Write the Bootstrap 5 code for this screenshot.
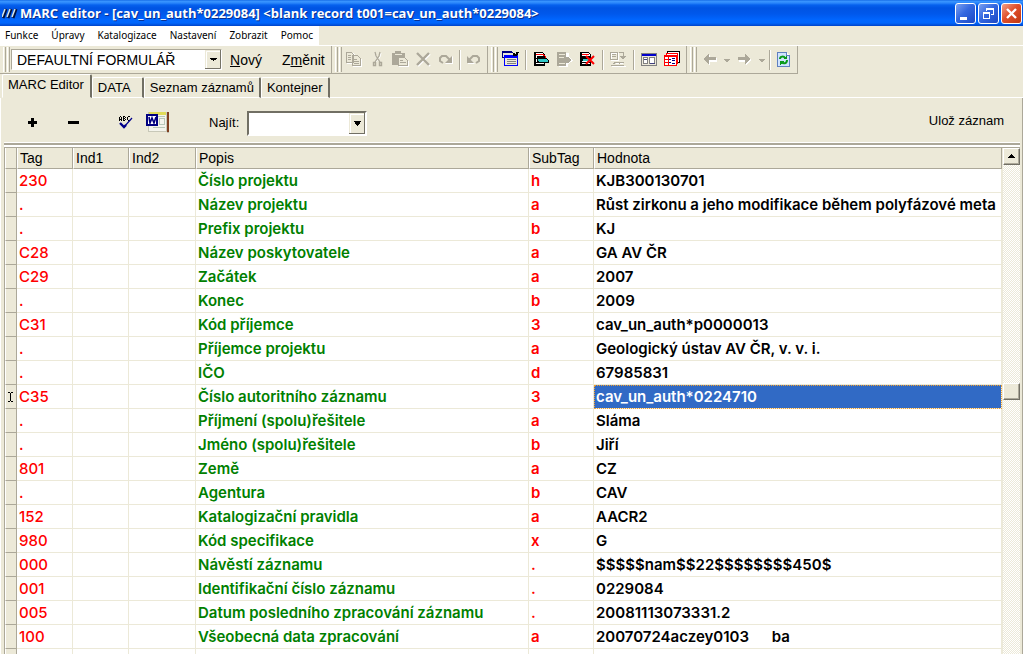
<!DOCTYPE html>
<html lang="cs">
<head>
<meta charset="utf-8">
<meta name="viewport" content="width=device-width, initial-scale=1">
<title>MARC editor</title>
<link href="https://cdn.jsdelivr.net/npm/bootstrap@5.3.0/dist/css/bootstrap.min.css" rel="stylesheet">
<style>
:root{--face:#ece9d8;--shade:#aca899;--dark:#716f64;--sel:#316ac5}
body{background:var(--face);color:#000;font:14px/18px "Liberation Sans",sans-serif;overflow:hidden}
button{color:inherit;background:none;border:0;padding:0;font:inherit}
svg{display:block;shape-rendering:crispEdges}
.smooth{shape-rendering:auto}
.titlebar{height:26px;background:linear-gradient(#0a5fe0 0,#3c97ff 1px,#2a86fb 3px,#0661ee 5px,#0054e3 8px,#0058ec 14px,#0066ff 20px,#0066fc 23px,#0043c8 26px);color:#fff;font:700 13px/26px "Open Sans",sans-serif;text-shadow:1px 1px #0a2f8c;padding:0 1px 0 2px}
.winbtn{width:21px;height:21px;border:1px solid #fff;border-radius:3px;background:linear-gradient(135deg,#7ba0f0,#3468e0 45%,#1d48c4)}
.winbtn.shut{background:linear-gradient(135deg,#f0a088,#e0502c 45%,#c03810)}
.menubar{height:19px;background:#fff;width:fit-content;font:10px/18px "Noto Sans",sans-serif;padding:0 6px 0 5px;gap:13px}
.menubar a{color:#000;text-decoration:none}
.bands{border-top:1px solid #fff;height:29px}
.band{height:28px;border-right:1px solid var(--shade);border-bottom:1px solid var(--shade);padding-right:2px}
.grip{width:11px;height:25px;padding-left:3px;gap:1px}
.grip i{width:3px;border-left:1px solid #fff;border-right:1px solid var(--shade)}
.tool{width:23px;height:24px}
.drop{width:12px;height:24px}
.vsep,.vsep-s{width:8px;height:20px;background:linear-gradient(90deg,transparent 3px,var(--shade) 3px 4px,#fff 4px 5px,transparent 5px)}
.vsep-s{width:4px;background:linear-gradient(90deg,transparent 1px,var(--shade) 1px 2px,#fff 2px 3px,transparent 3px)}
.combo{appearance:none;border:1px solid;border-color:var(--shade) #fff #fff var(--shade);border-radius:0;color:#000;background:#fff url("data:image/svg+xml,%3Csvg xmlns='http://www.w3.org/2000/svg' width='16' height='20' shape-rendering='crispEdges'%3E%3Cpath fill='%23ece9d8' d='M0 0h16v20H0z'/%3E%3Cpath stroke='%23fff' fill='none' d='M1.500 19V1.500H15'/%3E%3Cpath stroke='%23716f64' fill='none' d='M0 19.500H15.500V0'/%3E%3Cpath d='M5 8h7v1H5zM6 9h5v1H6zM7 10h3v1H7zM8 11h1v1H8z'/%3E%3C/svg%3E") right center/16px 100% no-repeat;padding:0 18px 0 5px;outline:0}
.form-combo{width:211px;height:21px;line-height:18px}
.find-combo{width:120px;height:25px;border-width:2px;border-color:var(--dark) #fff #fff var(--dark)}
.tabs{height:24px;font-size:13px;padding-left:2px}
.tabs button{border-right:2px solid var(--dark);border-left:1px solid #fff;border-top:1px solid #fff;border-radius:2px 2px 0 0;height:21px;min-width:52px;text-align:left;align-self:flex-end;line-height:20px;padding:0 5px 0 4px;border-bottom:1px solid #fff}
.tabs button + button{padding-left:5px}
.tabs button.active{height:24px;border-bottom-color:var(--face);padding:0 6px 3px 5px}
.tabs .fill{border-bottom:1px solid #fff}
.panel{border-left:1px solid #fff;border-right:1px solid var(--shade);padding:0 2px 0 3px;min-height:0}
.actions{height:45px;font-size:13px;padding:6px 16px 0 17px;border-bottom:1px solid #fff}
.rule{height:5px;background:linear-gradient(var(--shade) 2px,#fff 2px 4px,var(--shade) 4px)}
.act{width:40px;height:24px}
.spell{width:29px;height:24px;margin-left:14px}
.word-btn{width:30px;height:24px;margin-right:35px}
.grid{table-layout:fixed;width:100%;border-collapse:separate;border-spacing:0;background:#fff;border-left:1px solid var(--shade)}
.grid th{height:21px;font-weight:400;background:var(--face);border-right:1px solid var(--shade);border-bottom:1px solid var(--shade);border-left:1px solid #fff;padding:0 2px;line-height:19px}
.grid td{height:24px;font:600 15px/22px Inter,sans-serif;border-right:1px solid var(--face);border-bottom:1px solid var(--face);padding:0 2px;white-space:pre;overflow:hidden}
.grid td.mk{background:var(--face);border-color:var(--shade);border-left:1px solid #fff;padding:0}
.grid td:nth-child(2),.grid td:nth-child(6){color:#f00}
.grid td:nth-child(5){color:#008000}
.grid td:nth-child(2){font-weight:500}
.grid tr.cur td:last-child{background:var(--sel);color:#fff;outline:1px dotted #f0a030;outline-offset:-1px}
.c-mk{width:12px}.c-tag{width:56px}.c-ind1{width:56px}.c-ind2{width:67px}.c-pop{width:333px}.c-sub{width:65px}
.sbar{width:18px;background:repeating-conic-gradient(#fff 0 25%,var(--face) 0 50%) 0 0/2px 2px;border-left:1px solid var(--face)}
.sbtn{height:17px;background:var(--face);border:1px solid;border-color:#fff var(--dark) var(--dark) #fff;box-shadow:inset -1px -1px var(--shade)}
.above{flex:218 0 0}.below{flex:255 0 0}
</style>
</head>
<body class="vh-100 d-flex flex-column">
<header class="titlebar d-flex align-items-center flex-shrink-0">
  <svg class="smooth" width="18" height="14"><path d="M1 12 4 3M6 12 9 3M11 12l3-9" stroke="#001040" stroke-width="3"/><path d="M0 11 3 3M5 11 8 3M10 11l3-8" stroke="#d8e8e8" stroke-width="1.500"/></svg>
  <span class="flex-grow-1 text-nowrap overflow-hidden">MARC editor - [cav_un_auth*0229084] &lt;blank record t001=cav_un_auth*0229084&gt;</span>
  <div class="d-flex" style="gap:2px">
    <button class="winbtn" aria-label="Minimalizovat"><svg width="19" height="19"><path fill="#fff" d="M4 13h7v3H4z"/></svg></button>
    <button class="winbtn" aria-label="Obnovit"><svg width="19" height="19"><path fill="none" stroke="#fff" d="M7.500 7V4.500h7v6H12M4.500 8.500h6v6h-6z"/><path fill="#fff" d="M7 4h8v2H7zM4 8h7v2H4z"/></svg></button>
    <button class="winbtn shut" aria-label="Zavřít"><svg class="smooth" width="19" height="19"><path stroke="#fff" stroke-width="2.400" d="m5 5 9 9m0-9-9 9"/></svg></button>
  </div>
</header>
<nav class="menubar d-flex flex-shrink-0"><a href="#">Funkce</a><a href="#">Úpravy</a><a href="#">Katalogizace</a><a href="#">Nastavení</a><a href="#">Zobrazit</a><a href="#">Pomoc</a></nav>
<div class="bands d-flex flex-shrink-0">
  <div class="band d-flex align-items-center">
    <div class="grip d-flex"><i></i><i></i></div>
    <select class="combo form-combo" aria-label="Formulář"><option>DEFAULTNÍ FORMULÁŘ</option></select>
    <button class="ms-1 ps-1 pe-2"><u>N</u>ový</button><button class="ms-2 px-1">Z<u>m</u>ěnit</button>
  </div>
  <div class="band d-flex align-items-center">
    <div class="grip d-flex"><i></i><i></i></div>
    <button class="tool" aria-label="Kopírovat"><svg width="23" height="24"><path fill="none" stroke="#fff" d="M4.500 5.500h6l2 2v8h-8zM10.500 8.500h5l3 3v7h-8z"/><path fill="#ece9d8" stroke="#aca899" d="M3.500 4.500h5l2 2v8h-7zM9.500 7.500h5l3 3v7h-8z"/><path stroke="#aca899" d="M5 7.500h3M5 9.500h3M5 11.500h3M11 11.500h3M11 13.500h5M11 15.500h5"/></svg></button>
    <button class="tool" aria-label="Vyjmout"><svg class="smooth" width="23" height="24"><path fill="none" stroke="#fff" d="m9 5 1 4 5 6M15 5l-1 4-5 6"/><path fill="none" stroke="#aca899" stroke-width="1.300" d="m9 4 1 4 4 6M14 4l-1 4-4 6"/><path fill="none" stroke="#aca899" stroke-width="1.400" d="M7.500 14.500h2v3h-2zM13.500 14.500h2v3h-2z"/></svg></button>
    <button class="tool" aria-label="Vložit"><svg width="23" height="24"><path fill="#aca899" d="M3 5h3V3h6v2h4v6h-4v6H3z"/><path fill="#ece9d8" d="M6 6h7v1H6z"/><path fill="#ece9d8" stroke="#fff" d="M10.500 10.500h6l3 3v5h-9z"/><path fill="#ece9d8" stroke="#aca899" d="M9.500 9.500h6l3 3v5h-9z"/><path stroke="#aca899" d="M11 12.500h3M11 14.500h6"/></svg></button>
    <button class="tool" aria-label="Smazat"><svg class="smooth" width="23" height="24"><path stroke="#fff" stroke-width="2" d="m6 6 12 12M18 6 6 18"/><path stroke="#aca899" stroke-width="2.400" d="m5 5 12 12M17 5 5 17"/></svg></button>
    <button class="tool" aria-label="Znovu"><svg class="smooth" width="23" height="24"><path fill="#fff" d="M18 8v8h-8z"/><path fill="none" stroke="#aca899" stroke-width="2" d="M8 15 5 13v-3l2-2h4l4 4"/><path fill="#aca899" d="M17 8v7h-7z"/></svg></button>
    <span class="vsep-s"></span>
    <button class="tool" aria-label="Zpět"><svg class="smooth" width="23" height="24"><path fill="#fff" d="M6 9v7h7z"/><path fill="none" stroke="#aca899" stroke-width="2" d="m7 12 4-4h4l2 2v3l-3 2"/><path fill="#aca899" d="M5 8v7h7z"/></svg></button>
  </div>
  <div class="band d-flex align-items-center">
    <div class="grip d-flex"><i></i><i></i></div>
    <button class="tool" aria-label="Formulář"><svg width="23" height="24"><path fill="none" stroke="#000080" d="M6 9.500H3.500v-5h10"/><path fill="#000080" d="M3 3h10v2H3z"/><path fill="#ece9d8" stroke="#00f" d="M5.500 7.500h13v10h-13z"/><path fill="#00f" d="M5 7h14v3H5z"/><path stroke="#808080" d="M8 11.500h9M8 13.500h9M8 15.500h9"/><path d="M14 5h2v1h1V4h3v1h-1v2h-1v1h-4z"/></svg></button>
    <span class="vsep"></span>
    <button class="tool" aria-label="Tisk"><svg width="23" height="24"><path fill="#fff" stroke="#000" d="M4.500 4.500h8l2 2v11h-10z"/><path fill="none" stroke="#000" d="M5.500 4v14M4 16.500h11M6 10.500h5M6 14.500h9"/><path stroke="#f00" fill="none" d="M6 6.500h7l3 3"/><path d="M7 8h8v2H7z"/><path fill="#000" d="M6 10h10l3 2v3H8z"/><path fill="#30c8c8" d="M8 11h7l3 1v2H9z"/></svg></button>
    <button class="tool" aria-label="Export"><svg width="23" height="24"><path fill="#fff" d="M6 5h10v4l4 4-5 3v3H6z"/><path fill="#aca899" d="M4 4h9v5h2l4 3-4 3h-2v3H4z"/><path stroke="#ece9d8" d="M6 6.500h6M6 9.500h5M6 15.500h6"/></svg></button>
    <button class="tool" aria-label="Zrušit tisk"><svg width="23" height="24"><path fill="#fff" stroke="#000" d="M4.500 4.500h8l2 2v11h-10z"/><path fill="none" stroke="#000" d="M5.500 4v14M4 16.500h11M6 14.500h9"/><path d="M6 8h9v5H6z"/><path fill="#30c8c8" d="M7 11h6v2H7z"/><path stroke="#f00" d="M6 6.500h7"/><path class="smooth" stroke="#f00" stroke-width="2" d="m10 8 8 8M18 8l-8 8"/></svg></button>
    <span class="vsep"></span>
    <button class="tool" aria-label="Převést"><svg width="23" height="24"><path fill="none" stroke="#fff" d="M4.500 5.500h7v7h-7zM5 18.500h14M9 15.500h7"/><path fill="none" stroke="#aca899" d="M3.500 4.500h7v7h-7zM5 6.500h4M5 8.500h4M12 4.500h4v4M6 15.500l3-1h3v1M4 17.500h13M13 14.500h4"/><path fill="#aca899" d="M13 8h6l-3 4z"/></svg></button>
    <span class="vsep"></span>
    <button class="tool" aria-label="Okno"><svg width="23" height="24"><path fill="#fff" stroke="#808080" d="M3.500 5.500h15v12h-15z"/><path fill="#00c" d="M4 6h14v2H4z"/><path fill="#ece9d8" d="M4 8h14v9H4z"/><path fill="#fff" stroke="#808080" d="M5.500 9.500h4v6h-4zM11.500 9.500h5v6h-5z"/><path stroke="#404080" d="M6 11.500h3M12 15.500h5"/></svg></button>
    <button class="tool" aria-label="Seznam"><svg width="23" height="24"><path fill="#fff" stroke="#000" d="M6.500 3.500h12v11h-12z"/><path fill="#fff" stroke="#f00" d="M5.500 5.500h11v10h-11z"/><path fill="#fff" stroke="#f00" d="M3.500 7.500h12v10h-12z"/><path stroke="#f00" d="M4 8.500h11M7.500 9v8M4 11.500h3M4 14.500h3"/><path fill="#000080" d="M8 11h2v1H8zM8 14h2v1H8zM11 10h3v1h-3zM11 12h3v1h-3zM11 15h3v1h-3z"/></svg></button>
  </div>
  <div class="band d-flex align-items-center">
    <div class="grip d-flex"><i></i><i></i></div>
    <button class="tool" aria-label="Předchozí"><svg width="23" height="24"><path fill="#fff" d="m6 12 6-5v3h7v4h-7v3z"/><path fill="#aca899" d="m5 11 6-5v3h7v3h-7v4z"/></svg></button>
    <button class="drop" aria-label="Historie zpět"><svg width="12" height="24"><path fill="#aca899" d="M3 11h6v1H8v1H7v1H5v-1H4v-1H3z"/></svg></button>
    <button class="tool" aria-label="Další"><svg width="23" height="24"><path fill="#fff" d="m19 12-6-5v3H6v4h7v3z"/><path fill="#aca899" d="m18 11-6-5v3H5v3h7v4z"/></svg></button>
    <button class="drop" aria-label="Historie vpřed"><svg width="12" height="24"><path fill="#aca899" d="M3 11h6v1H8v1H7v1H5v-1H4v-1H3z"/></svg></button>
    <span class="vsep-s"></span>
    <button class="tool" aria-label="Obnovit stránku"><svg width="23" height="24"><path fill="#d0e4ff" stroke="#6080c0" d="M5.500 4.500h9l3 3v11h-12z"/><path fill="#fff" stroke="#6080c0" d="M14.500 4.500v3h3"/><path class="smooth" stroke="#0a9a1a" stroke-width="2" fill="none" d="M8 11c0-3 4-3 5-1M15 12c0 4-4 4-5 2"/><path fill="#0a9a1a" d="M15 7v4h-4zM8 17v-4h4z"/></svg></button>
  </div>
</div>
<div class="tabs d-flex flex-shrink-0" role="tablist">
  <button class="active" role="tab" aria-selected="true">MARC Editor</button><button role="tab">DATA</button><button role="tab">Seznam záznamů</button><button role="tab">Kontejner</button><span class="fill flex-grow-1"></span>
</div>
<main class="panel flex-grow-1 d-flex flex-column">
  <div class="actions d-flex align-items-center flex-shrink-0">
    <button class="act" aria-label="Přidat"><svg width="24" height="24"><path d="M7 10h9v3H7zM10 7h3v9h-3z"/></svg></button>
    <button class="act" aria-label="Odebrat"><svg width="24" height="24"><path d="M7 10h11v3H7z"/></svg></button>
    <button class="spell" aria-label="Kontrola pravopisu"><svg width="24" height="24"><path d="M5 5h1v1H5zM4 6h1v4H4zM6 6h1v4H6zM5 8h1v1H5zM8 5h1v5H8zM9 5h1v1H9zM9 7h1v1H9zM9 9h1v1H9zM10 6h1v1h-1zM10 8h1v1h-1zM12 6h1v3h-1zM13 5h2v1h-2zM13 9h2v1h-2z"/><path class="smooth" fill="none" stroke="#00008b" stroke-width="1.200" d="m9 16 8-9"/><path class="smooth" fill="none" stroke="#00008b" stroke-width="2.400" d="m5 12 4 4 2-2"/></svg></button>
    <button class="word-btn" aria-label="Word"><svg width="30" height="24"><path fill="#c0bcb0" d="M5 22h18V3h2v19z"/><path fill="#f4f4ec" stroke="#c8c8b8" d="M4.500 1.500h18v19h-18z"/><path fill="#e0dc58" d="M5 1h17v3H5z"/><path fill="#804020" d="M23 1h2v20h-2z"/><path fill="none" stroke="#b8c8b8" d="M15.500 7.500h5v6h-5zM9 16.500h12M13 5.500h8"/><path fill="#fff" stroke="#000080" stroke-width="2" d="M3 4h10v10H3z"/><path class="smooth" fill="none" stroke="#000080" stroke-width="1.600" d="m5 6 1 6 2-5 2 5 2-6"/></svg></button>
    <label class="me-2" for="find">Najít:</label>
    <select class="combo find-combo" id="find"><option></option></select>
    <button class="ms-auto mb-1">Ulož záznam</button>
  </div>
  <div class="rule flex-shrink-0"></div>
  <div class="d-flex flex-grow-1 overflow-hidden">
    <div class="flex-grow-1 overflow-hidden">
      <table class="grid">
        <colgroup><col class="c-mk"><col class="c-tag"><col class="c-ind1"><col class="c-ind2"><col class="c-pop"><col class="c-sub"><col></colgroup>
        <thead><tr><th></th><th>Tag</th><th>Ind1</th><th>Ind2</th><th>Popis</th><th>SubTag</th><th>Hodnota</th></tr></thead>
        <tbody>
<tr><td class="mk"></td><td>230</td><td></td><td></td><td>Číslo projektu</td><td>h</td><td>KJB300130701</td></tr>
<tr><td class="mk"></td><td>.</td><td></td><td></td><td>Název projektu</td><td>a</td><td>Růst zirkonu a jeho modifikace během polyfázové meta</td></tr>
<tr><td class="mk"></td><td>.</td><td></td><td></td><td>Prefix projektu</td><td>b</td><td>KJ</td></tr>
<tr><td class="mk"></td><td>C28</td><td></td><td></td><td>Název poskytovatele</td><td>a</td><td>GA AV ČR</td></tr>
<tr><td class="mk"></td><td>C29</td><td></td><td></td><td>Začátek</td><td>a</td><td>2007</td></tr>
<tr><td class="mk"></td><td>.</td><td></td><td></td><td>Konec</td><td>b</td><td>2009</td></tr>
<tr><td class="mk"></td><td>C31</td><td></td><td></td><td>Kód příjemce</td><td>3</td><td>cav_un_auth*p0000013</td></tr>
<tr><td class="mk"></td><td>.</td><td></td><td></td><td>Příjemce projektu</td><td>a</td><td>Geologický ústav AV ČR, v. v. i.</td></tr>
<tr><td class="mk"></td><td>.</td><td></td><td></td><td>IČO</td><td>d</td><td>67985831</td></tr>
<tr class="cur"><td class="mk"><svg width="10" height="10"><path fill="none" stroke="#000" d="M2 .5h2M5 .5h2M4.500 1v8M2 9.500h2M5 9.500h2"/></svg></td><td>C35</td><td></td><td></td><td>Číslo autoritního záznamu</td><td>3</td><td>cav_un_auth*0224710</td></tr>
<tr><td class="mk"></td><td>.</td><td></td><td></td><td>Příjmení (spolu)řešitele</td><td>a</td><td>Sláma</td></tr>
<tr><td class="mk"></td><td>.</td><td></td><td></td><td>Jméno (spolu)řešitele</td><td>b</td><td>Jiří</td></tr>
<tr><td class="mk"></td><td>801</td><td></td><td></td><td>Země</td><td>a</td><td>CZ</td></tr>
<tr><td class="mk"></td><td>.</td><td></td><td></td><td>Agentura</td><td>b</td><td>CAV</td></tr>
<tr><td class="mk"></td><td>152</td><td></td><td></td><td>Katalogizační pravidla</td><td>a</td><td>AACR2</td></tr>
<tr><td class="mk"></td><td>980</td><td></td><td></td><td>Kód specifikace</td><td>x</td><td>G</td></tr>
<tr><td class="mk"></td><td>000</td><td></td><td></td><td>Návěstí záznamu</td><td>.</td><td>$$$$$nam$$22$$$$$$$$450$</td></tr>
<tr><td class="mk"></td><td>001</td><td></td><td></td><td>Identifikační číslo záznamu</td><td>.</td><td>0229084</td></tr>
<tr><td class="mk"></td><td>005</td><td></td><td></td><td>Datum posledního zpracování záznamu</td><td>.</td><td>20081113073331.2</td></tr>
<tr><td class="mk"></td><td>100</td><td></td><td></td><td>Všeobecná data zpracování</td><td>a</td><td>20070724aczey0103      ba</td></tr>
<tr><td class="mk"></td><td></td><td></td><td></td><td></td><td></td><td></td></tr>
        </tbody>
      </table>
    </div>
    <div class="sbar d-flex flex-column flex-shrink-0">
      <button class="sbtn flex-shrink-0" aria-label="Nahoru"><svg width="15" height="15"><path d="M7 5h1v1H7zM6 6h3v1H6zM5 7h5v1H5zM4 8h7v1H4z"/></svg></button>
      <span class="above"></span><span class="sbtn flex-shrink-0"></span><span class="below"></span>
    </div>
  </div>
</main>
<script src="https://cdn.jsdelivr.net/npm/bootstrap@5.3.0/dist/js/bootstrap.bundle.min.js"></script>
</body>
</html>
